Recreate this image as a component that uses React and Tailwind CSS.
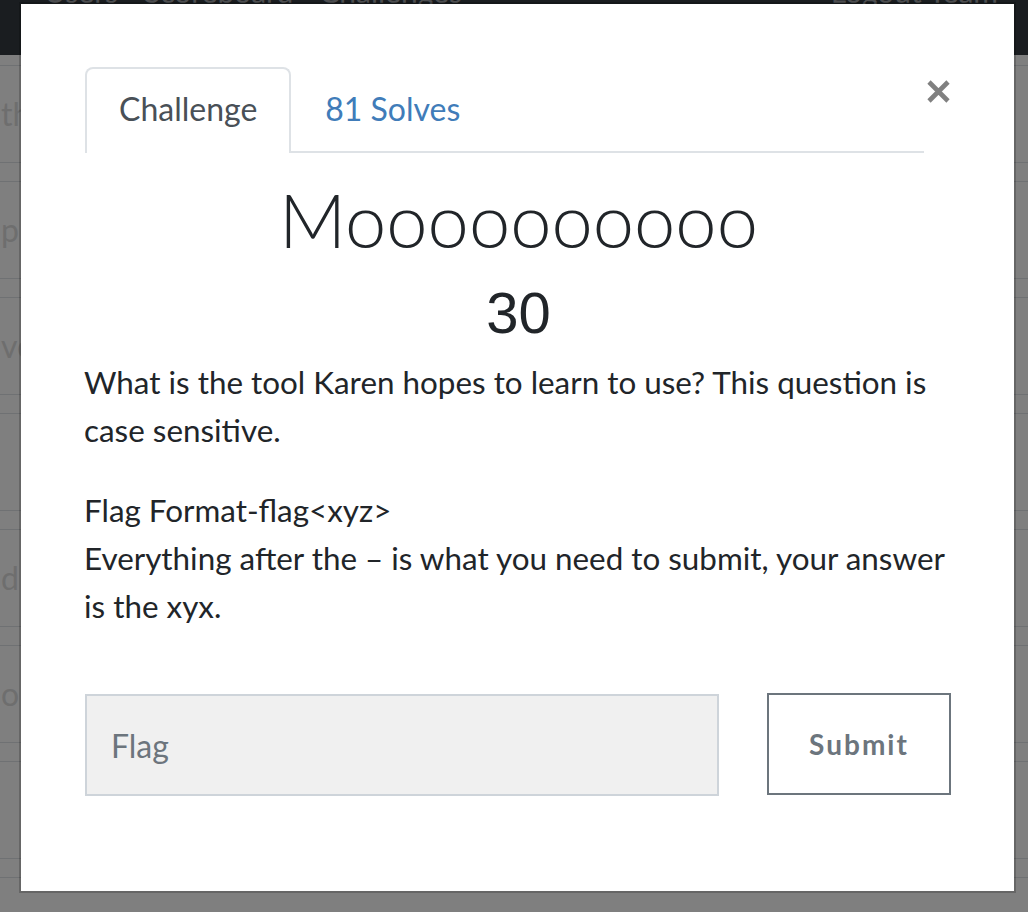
import React from 'react';

const lato = { fontFamily: 'Lato, "Open Sans", sans-serif' };

const rows = ["th", "p", "ve", "", "d t", "o", "", ""];

const Backdrop = () => (
  <div className="h-[912px] overflow-hidden bg-white" style={lato}>
    <div className="h-[55px] bg-[#343a40] flex gap-[26px] pl-[44px] text-[30px] text-[#9a9da0] leading-none">
      <span className="-mt-[24px]">Users</span>
      <span className="-mt-[24px]">Scoreboard</span>
      <span className="-mt-[24px]">Challenges</span>
      <span className="flex-1" />
      <span className="-mt-[24px] pr-[30px]">Logout Team</span>
    </div>
    <div className="pt-[10px]">
      {rows.map((t, i) => (
        <div key={i} className="h-[98px] mb-[18px] border-y border-[#dee2e6] flex items-center text-[32px] text-[#dcdcdc]">
          <span className="pl-[1px]">{t}</span>
        </div>
      ))}
    </div>
  </div>
);

const CloseIcon = () => (
  <svg width="23" height="23" viewBox="0 0 23 23">
    <path d="M2 2 L21 21 M21 2 L2 21" stroke="#808080" strokeWidth="4.6" strokeLinecap="butt" />
  </svg>
);

const ChallengeModal = () => (
  <div className="fixed inset-0 bg-black/50">
    <div className="ml-[19px] mt-[2px] w-[997px] h-[891px] bg-white bg-clip-padding border-2 border-black/20 pt-[63px] pl-[64px] pr-[62px] text-[#212529]" style={lato}>
      <div className="flex items-start">
        <div className="flex-1 flex border-b-2 border-[#dee2e6]">
          <div className="border-2 border-b-0 border-[#dee2e6] rounded-t-[8px] px-[32px] py-[16px] text-[32px] leading-[48px] text-[#495057] bg-white -mb-[2px]">
            Challenge
          </div>
          <div className="border-2 border-transparent px-[32px] py-[16px] text-[32px] leading-[48px] text-[#407cb9]">
            81 Solves
          </div>
        </div>
        <button className="w-[28px] flex justify-center pt-[13px]">
          <CloseIcon />
        </button>
      </div>

      <h3 className="mt-[22px] text-center text-[74px] leading-[89px] font-light">Moooooooooo</h3>
      <h4 className="mt-[14px] text-center text-[58px] leading-[70px]" style={{ fontFamily: '"Liberation Sans", Arial, sans-serif' }}>30</h4>

      <div className="mt-[10px] -ml-[1px] text-[31.4px] leading-[48px]">
        <p className="mb-[32px]">What is the tool Karen hopes to learn to use? This question is case sensitive.</p>
        <p>
          Flag Format-flag&lt;xyz&gt;
          <br />
          Everything after the – is what you need to submit, your answer is the xyx.
        </p>
      </div>

      <div className="mt-[64px] flex justify-between">
        <input
          placeholder="Flag"
          className="w-[634px] h-[102px] border-2 border-[#ced4da] bg-[#f0f0f0] pl-[24px] text-[32px] text-[#495057] placeholder:text-[#6c757d] outline-none"
        />
        <button className="w-[184px] h-[102px] -mt-[1px] mr-[1px] border-2 border-[#6c757d] text-[#6c757d] font-bold text-[28px] tracking-[2px]">
          Submit
        </button>
      </div>
    </div>
  </div>
);

export default function App() {
  return (
    <div className="relative">
      <Backdrop />
      <ChallengeModal />
    </div>
  );
}
